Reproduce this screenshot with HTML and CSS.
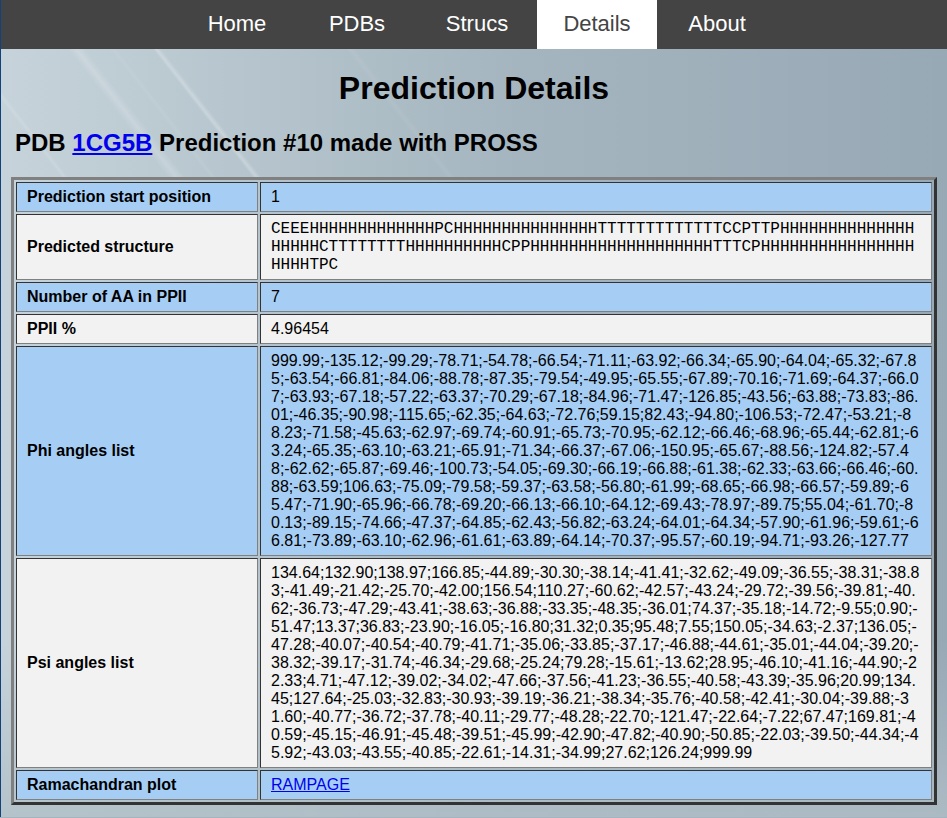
FILE: index.html
```html
<!DOCTYPE html>
<html lang="en">
<head>
<meta charset="UTF-8">
<meta name="viewport" content="width=device-width, initial-scale=1.0">
<title>Prediction Details</title>
<link rel="stylesheet" href="styles.css">
</head>
<body>
    <ul class="nav">
        <li><a href="#">Home</a></li>
        <li><a href="#">PDBs</a></li>
        <li><a href="#">Strucs</a></li>
        <li><a href="#" class="active">Details</a></li>
        <li><a href="#">About</a></li>
    </ul>
    <h1>Prediction Details</h1>
    <h2>PDB <a href="#">1CG5B</a> Prediction #10 made with PROSS</h2>
    <table class="details">
        <tr class="odd">
            <th>Prediction start position</th>
            <td>1</td>
        </tr>
        <tr class="even">
            <th>Predicted structure</th>
            <td class="seq">CEEEHHHHHHHHHHHHHPCHHHHHHHHHHHHHHHTTTTTTTTTTTTTCCPTTPHHHHHHHHHHHHHHHHHHHCTTTTTTTTHHHHHHHHHHCPPHHHHHHHHHHHHHHHHHHHTTTCPHHHHHHHHHHHHHHHHHHHHTPC</td>
        </tr>
        <tr class="odd">
            <th>Number of AA in PPII</th>
            <td>7</td>
        </tr>
        <tr class="even">
            <th>PPII %</th>
            <td>4.96454</td>
        </tr>
        <tr class="odd">
            <th>Phi angles list</th>
            <td>999.99;-135.12;-99.29;-78.71;-54.78;-66.54;-71.11;-63.92;-66.34;-65.90;-64.04;-65.32;-67.85;-63.54;-66.81;-84.06;-88.78;-87.35;-79.54;-49.95;-65.55;-67.89;-70.16;-71.69;-64.37;-66.07;-63.93;-67.18;-57.22;-63.37;-70.29;-67.18;-84.96;-71.47;-126.85;-43.56;-63.88;-73.83;-86.01;-46.35;-90.98;-115.65;-62.35;-64.63;-72.76;59.15;82.43;-94.80;-106.53;-72.47;-53.21;-88.23;-71.58;-45.63;-62.97;-69.74;-60.91;-65.73;-70.95;-62.12;-66.46;-68.96;-65.44;-62.81;-63.24;-65.35;-63.10;-63.21;-65.91;-71.34;-66.37;-67.06;-150.95;-65.67;-88.56;-124.82;-57.48;-62.62;-65.87;-69.46;-100.73;-54.05;-69.30;-66.19;-66.88;-61.38;-62.33;-63.66;-66.46;-60.88;-63.59;106.63;-75.09;-79.58;-59.37;-63.58;-56.80;-61.99;-68.65;-66.98;-66.57;-59.89;-65.47;-71.90;-65.96;-66.78;-69.20;-66.13;-66.10;-64.12;-69.43;-78.97;-89.75;55.04;-61.70;-80.13;-89.15;-74.66;-47.37;-64.85;-62.43;-56.82;-63.24;-64.01;-64.34;-57.90;-61.96;-59.61;-66.81;-73.89;-63.10;-62.96;-61.61;-63.89;-64.14;-70.37;-95.57;-60.19;-94.71;-93.26;-127.77</td>
        </tr>
        <tr class="even">
            <th>Psi angles list</th>
            <td>134.64;132.90;138.97;166.85;-44.89;-30.30;-38.14;-41.41;-32.62;-49.09;-36.55;-38.31;-38.83;-41.49;-21.42;-25.70;-42.00;156.54;110.27;-60.62;-42.57;-43.24;-29.72;-39.56;-39.81;-40.62;-36.73;-47.29;-43.41;-38.63;-36.88;-33.35;-48.35;-36.01;74.37;-35.18;-14.72;-9.55;0.90;-51.47;13.37;36.83;-23.90;-16.05;-16.80;31.32;0.35;95.48;7.55;150.05;-34.63;-2.37;136.05;-47.28;-40.07;-40.54;-40.79;-41.71;-35.06;-33.85;-37.17;-46.88;-44.61;-35.01;-44.04;-39.20;-38.32;-39.17;-31.74;-46.34;-29.68;-25.24;79.28;-15.61;-13.62;28.95;-46.10;-41.16;-44.90;-22.33;4.71;-47.12;-39.02;-34.02;-47.66;-37.56;-41.23;-36.55;-40.58;-43.39;-35.96;20.99;134.45;127.64;-25.03;-32.83;-30.93;-39.19;-36.21;-38.34;-35.76;-40.58;-42.41;-30.04;-39.88;-31.60;-40.77;-36.72;-37.78;-40.11;-29.77;-48.28;-22.70;-121.47;-22.64;-7.22;67.47;169.81;-40.59;-45.15;-46.91;-45.48;-39.51;-45.99;-42.90;-47.82;-40.90;-50.85;-22.03;-39.50;-44.34;-45.92;-43.03;-43.55;-40.85;-22.61;-14.31;-34.99;27.62;126.24;999.99</td>
        </tr>
        <tr class="odd">
            <th>Ramachandran plot</th>
            <td><a href="#">RAMPAGE</a></td>
        </tr>
    </table>
</body>
</html>
```

FILE: styles.css
```css
html {
    background-color: #a5b5bf;
}
body {
    font-family: "Liberation Sans", Arial, sans-serif;
    margin: 0;
    padding-bottom: 12px;
    border-left: 1px solid #12417c;
    /* streaks only show above the table, so they get a short box */
    background-image:
        linear-gradient(52deg, transparent 49px, rgba(255,255,255,.13) 52px, transparent 55px),
        linear-gradient(52deg, transparent 133px, rgba(255,255,255,.18) 140px, transparent 147px),
        linear-gradient(52deg, transparent 166px, rgba(255,255,255,.06) 169px, transparent 172px),
        linear-gradient(52deg, transparent 200px, rgba(255,255,255,.25) 203px, transparent 207px),
        linear-gradient(52deg, transparent 352px, rgba(255,255,255,.05) 356px, transparent 360px),
        linear-gradient(to bottom, transparent 640px, rgba(176,190,198,.8) 818px),
        linear-gradient(to right, #c6d3da, #a4b5bf 55%, #98a9b6);
    background-size:
        947px 180px,
        947px 180px,
        947px 180px,
        947px 180px,
        947px 180px,
        947px 818px,
        947px 818px;
    background-repeat: no-repeat;
}
.nav {
    display: flex;
    justify-content: center;
    list-style: none;
    margin: 0;
    padding: 0 0 0 6px;
    background-color: #444;
}
.nav a {
    display: block;
    width: 120px;
    padding: 10px 0 12px;
    font-size: 22px;
    line-height: 27px;
    text-align: center;
    text-decoration: none;
    color: #fff;
}
.nav a.active {
    background-color: #fff;
    color: #444;
}
h1 {
    font-size: 32px;
    line-height: 37px;
    text-align: center;
    margin: 21px 0 22px;
}
h2 {
    font-size: 24px;
    line-height: 28px;
    margin: 0 14px 20px;
}
.details {
    width: 926px;
    margin-left: 10px;
    border-width: 3px;
    border-style: solid;
    border-color: #808080 #333 #333 #808080;
    border-spacing: 2px;
    font-size: 16px;
    line-height: 18px;
}
.details th,
.details td {
    padding: 5px 10px;
    border-width: 1px;
    border-style: solid;
    border-color: #333 #808080 #808080 #333;
}
.details th {
    width: 220px;
    text-align: left;
}
.details td {
    word-break: break-all;
}
.details .seq {
    font-family: "Liberation Mono", monospace;
}
.odd {
    background-color: #a6cef5;
}
.even {
    background-color: #f2f2f2;
}
```
